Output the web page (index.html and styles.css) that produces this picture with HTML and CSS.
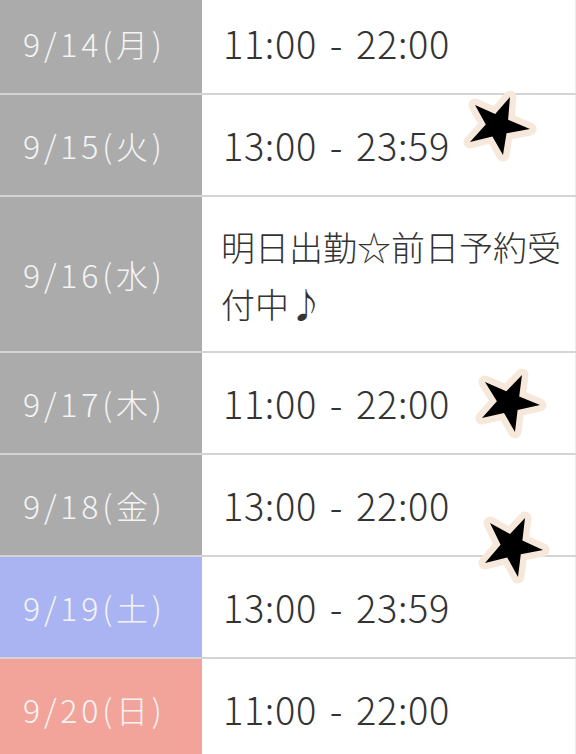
FILE: index.html
```html
<!DOCTYPE html>
<html lang="ja">
<head>
<meta charset="utf-8">
<title>出勤表</title>
<link rel="stylesheet" href="styles.css">
</head>
<body>
<div class="page">
  <div class="schedule">
    <div class="row">
      <div class="date">9/14(月)</div>
      <div class="time">11:00 - 22:00</div>
    </div>
    <div class="row">
      <div class="date">9/15(火)</div>
      <div class="time">13:00 - 23:59</div>
    </div>
    <div class="row">
      <div class="date">9/16(水)</div>
      <div class="time note">明日出勤☆前日予約受付中♪</div>
    </div>
    <div class="row">
      <div class="date">9/17(木)</div>
      <div class="time">11:00 - 22:00</div>
    </div>
    <div class="row">
      <div class="date">9/18(金)</div>
      <div class="time">13:00 - 22:00</div>
    </div>
    <div class="row">
      <div class="date sat">9/19(土)</div>
      <div class="time">13:00 - 23:59</div>
    </div>
    <div class="row">
      <div class="date sun">9/20(日)</div>
      <div class="time">11:00 - 22:00</div>
    </div>
  </div>
  <svg class="stickers" width="576" height="754" viewBox="0 0 576 754" aria-hidden="true">
    <g class="sticker">
      <polygon points="510,97 508.1,119.7 530,129 506.5,133.3 503,155 492.4,136.4 470,142 485.8,124.6 475,105 495.2,114"/>
      <polygon points="522,375 519.2,396.6 540,405 517.6,410 515,432 504,413 482,418 496.9,401.3 485,382 506.3,391.2"/>
      <polygon points="525,518 522.4,540.5 543,550 520.8,554.3 518,577 507.2,557.4 485,563 500.6,544.7 490,523 510,534.1"/>
    </g>
  </svg>
</div>
</body>
</html>
```
FILE: styles.css
```css
html, body {
  margin: 0;
  padding: 0;
  background: #ffffff;
}
.page {
  position: relative;
  width: 576px;
  height: 754px;
  overflow: hidden;
}
.schedule {
  margin-top: -7px;
  display: flex;
  flex-direction: column;
  font-family: "Noto Sans CJK JP", "Noto Sans", sans-serif;
}
.row {
  display: grid;
  grid-template-columns: 202px 1fr;
  border-bottom: 2px solid #d4d4d4;
}
.date {
  background: #ababab;
  color: #f4f4f4;
  font-size: 32px;
  font-weight: 300;
  letter-spacing: 3.8px;
  padding-left: 23px;
  display: flex;
  align-items: center;
  justify-content: flex-start;
  line-height: 54px;
}
.date.sat { background: #aab4f2; }
.date.sun { background: #f2a49b; }
.time {
  padding: 23px 0 23px 21px;
  color: #333333;
  font-size: 38px;
  font-weight: 300;
  letter-spacing: 0.6px;
  word-spacing: 4px;
  line-height: 54px;
  border-right: 1px solid #ececec;
}
.note {
  font-size: 34px;
  letter-spacing: 0;
  word-spacing: 0;
  line-height: 57px;
  padding-left: 19px;
  padding-top: 21px;
  padding-bottom: 19px;
}
.stickers {
  position: absolute;
  left: 0;
  top: 0;
  pointer-events: none;
}
.sticker polygon {
  fill: #000000;
  stroke: #f6e8da;
  stroke-width: 13;
  stroke-linejoin: round;
  paint-order: stroke;
}
```
